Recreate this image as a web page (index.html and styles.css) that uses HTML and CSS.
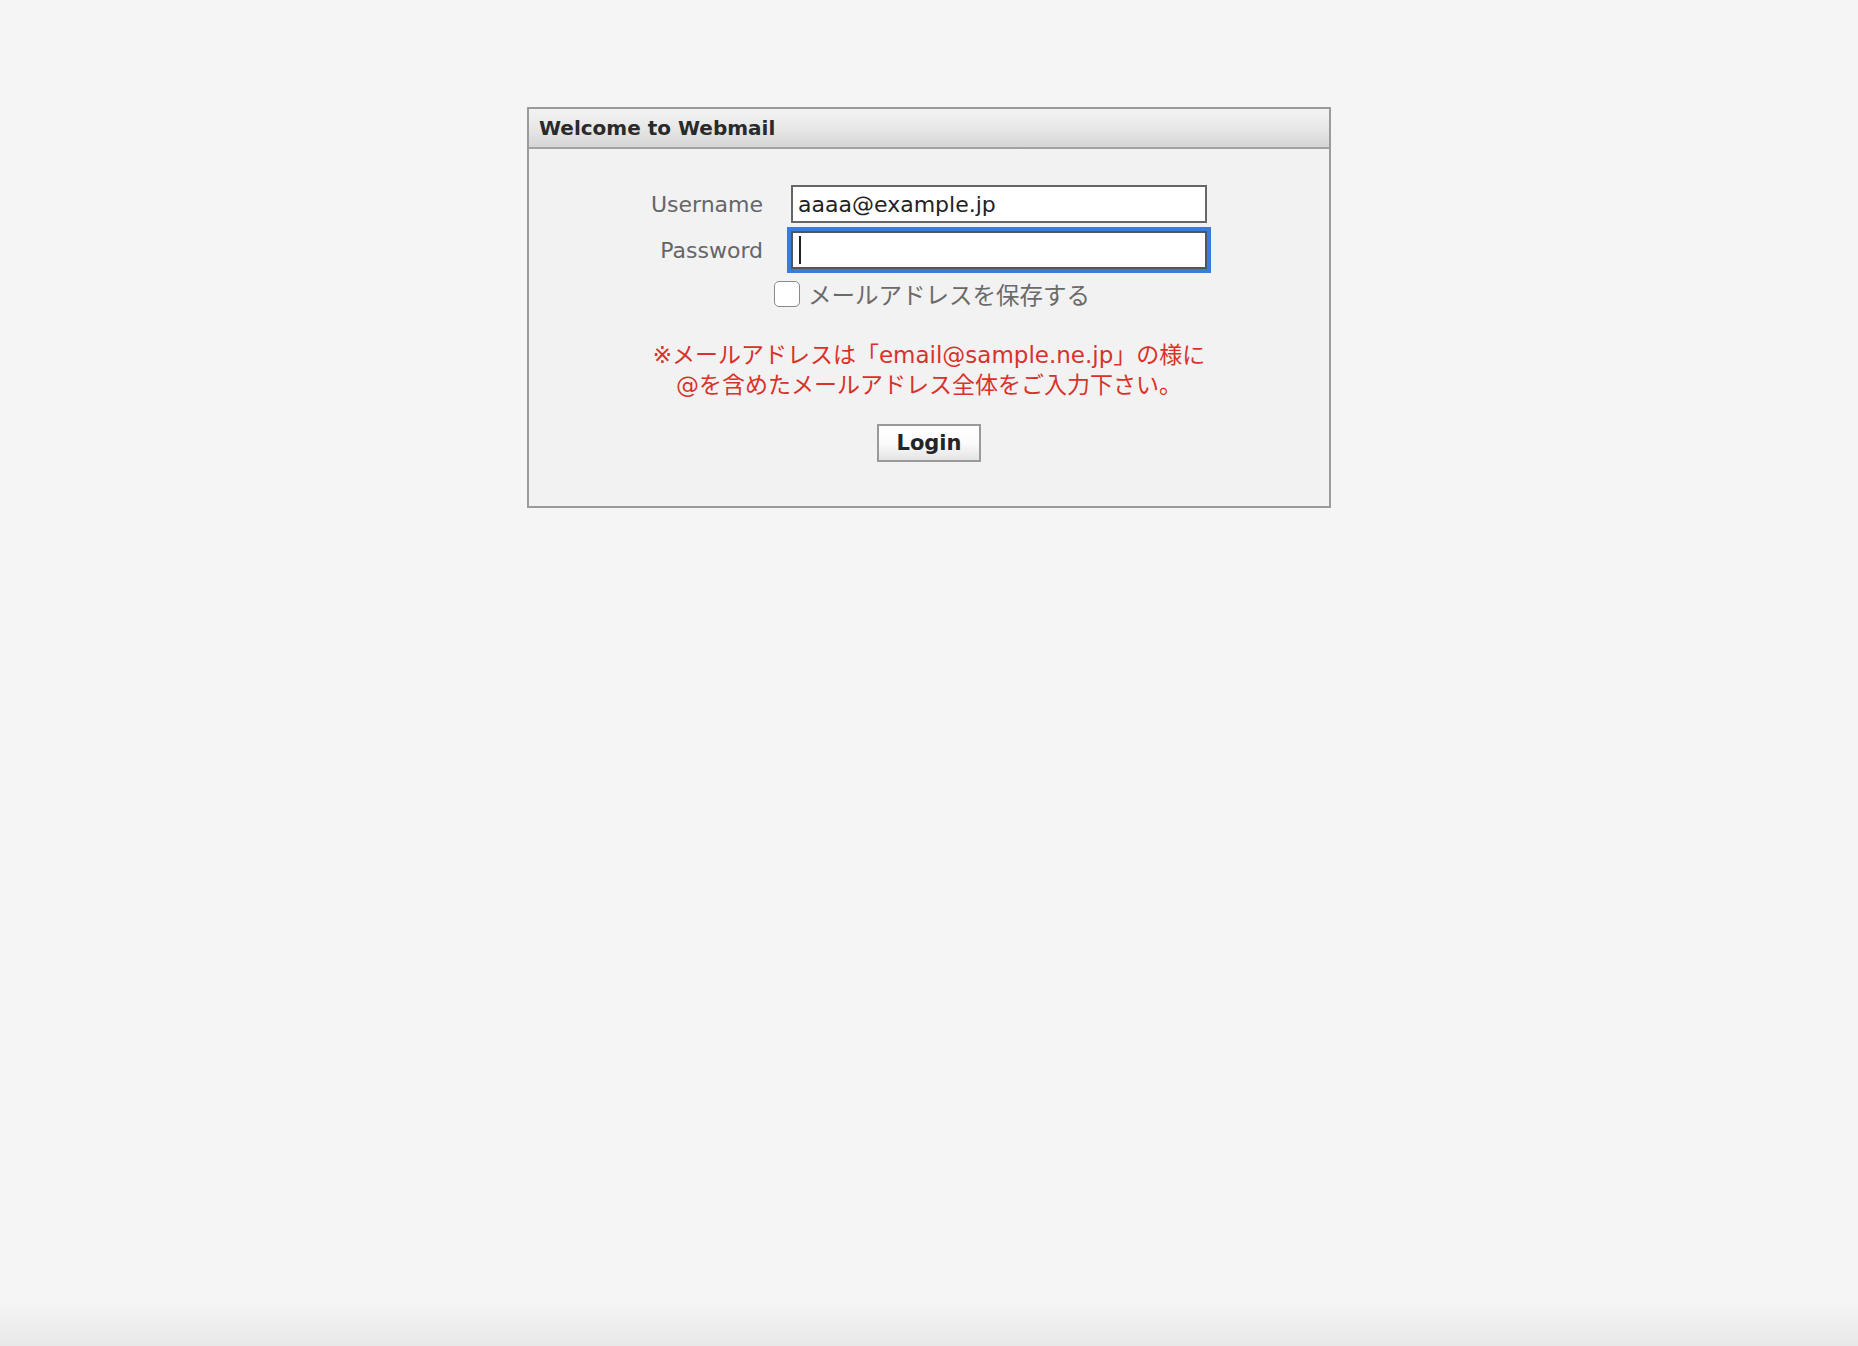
FILE: index.html
```html
<!DOCTYPE html>
<html lang="ja">
<head>
<meta charset="utf-8">
<title>Welcome to Webmail</title>
<link rel="stylesheet" href="styles.css">
</head>
<body>
<div class="page">
  <form class="panel" onsubmit="return false;">
    <div class="panel-header">Welcome to Webmail</div>
    <div class="panel-body">
      <div class="form-grid">
        <label class="field-label" for="user">Username</label>
        <input class="text-input" id="user" type="text" value="aaaa@example.jp">
        <label class="field-label" for="pass">Password</label>
        <span class="input-wrap">
          <input class="text-input is-focused" id="pass" type="password">
          <span class="caret"></span>
        </span>
      </div>
      <div class="remember">
        <input class="check" id="remember" type="checkbox">
        <label class="remember-label" for="remember">メールアドレスを保存する</label>
      </div>
      <p class="notice">※メールアドレスは「email@sample.ne.jp」の様に<br>@を含めたメールアドレス全体をご入力下さい。</p>
      <div class="actions">
        <button class="login-btn" type="submit">Login</button>
      </div>
    </div>
  </form>
</div>
</body>
</html>
```
FILE: styles.css
```css
html {
  min-height: 100%;
  background: linear-gradient(to bottom, #f5f5f5 0, #f5f5f5 calc(100% - 45px), #e8e8e8 100%);
}

body {
  margin: 0;
  min-height: 100vh;
  font-family: "DejaVu Sans", "Noto Sans CJK JP", sans-serif;
  color: #222;
}

.page {
  display: flex;
  justify-content: center;
  padding-top: 107px;
}

.panel {
  width: 800px;
  border: 2px solid #9b9b9b;
  background: #f2f2f2;
  margin: 0;
}

.panel-header {
  height: 38px;
  line-height: 38px;
  padding-left: 10px;
  font-size: 20px;
  font-weight: bold;
  color: #2a2a2a;
  background: linear-gradient(to bottom, #f3f3f3 0%, #e9e9e9 45%, #d6d6d6 100%);
  border-bottom: 2px solid #a2a2a2;
}

.panel-body {
  padding: 36px 0 44px;
  display: flex;
  flex-direction: column;
  align-items: center;
}

.form-grid {
  display: grid;
  grid-template-columns: auto 416px;
  column-gap: 28px;
  row-gap: 8px;
  align-items: center;
}

.field-label {
  text-align: right;
  font-size: 22px;
  color: #666;
}

.input-wrap {
  position: relative;
  display: block;
  width: 416px;
  height: 38px;
}

.text-input {
  box-sizing: border-box;
  display: block;
  width: 416px;
  height: 38px;
  margin: 0;
  padding: 0 5px;
  border: 2px solid #666;
  border-radius: 0;
  background: #fff;
  font-family: "DejaVu Sans", sans-serif;
  font-size: 22px;
  color: #222;
  caret-color: #222;
  outline: none;
}

.text-input.is-focused,
.text-input:focus {
  border-color: #555;
  outline: 4px solid #3b7bdb;
  outline-offset: 0;
}

.caret {
  position: absolute;
  left: 8px;
  top: 5px;
  width: 2px;
  height: 28px;
  background: #222;
}

.remember {
  display: flex;
  align-items: center;
  height: 30px;
  margin-top: 10px;
  gap: 8px;
  padding-left: 6px;
}

.check {
  appearance: none;
  -webkit-appearance: none;
  box-sizing: border-box;
  width: 26px;
  height: 26px;
  margin: 0;
  border: 1.5px solid #8a8a8a;
  border-radius: 5px;
  background: #fff;
}

.remember-label {
  font-family: "Noto Sans CJK JP", sans-serif;
  font-size: 23.5px;
  line-height: 30px;
  color: #6a6a6a;
}

.notice {
  margin: 31px 0 0;
  text-align: center;
  font-size: 23px;
  line-height: 30px;
  color: #d8322a;
}

.actions {
  margin-top: 24px;
  display: flex;
  justify-content: center;
}

.login-btn {
  box-sizing: border-box;
  width: 104px;
  height: 38px;
  margin: 0;
  padding: 0;
  border: 2px solid #9a9a9a;
  border-radius: 0;
  background: linear-gradient(to bottom, #ffffff 0%, #fbfbfb 50%, #e4e4e4 100%);
  font-family: "DejaVu Sans", sans-serif;
  font-size: 21px;
  font-weight: bold;
  color: #252525;
}
```
